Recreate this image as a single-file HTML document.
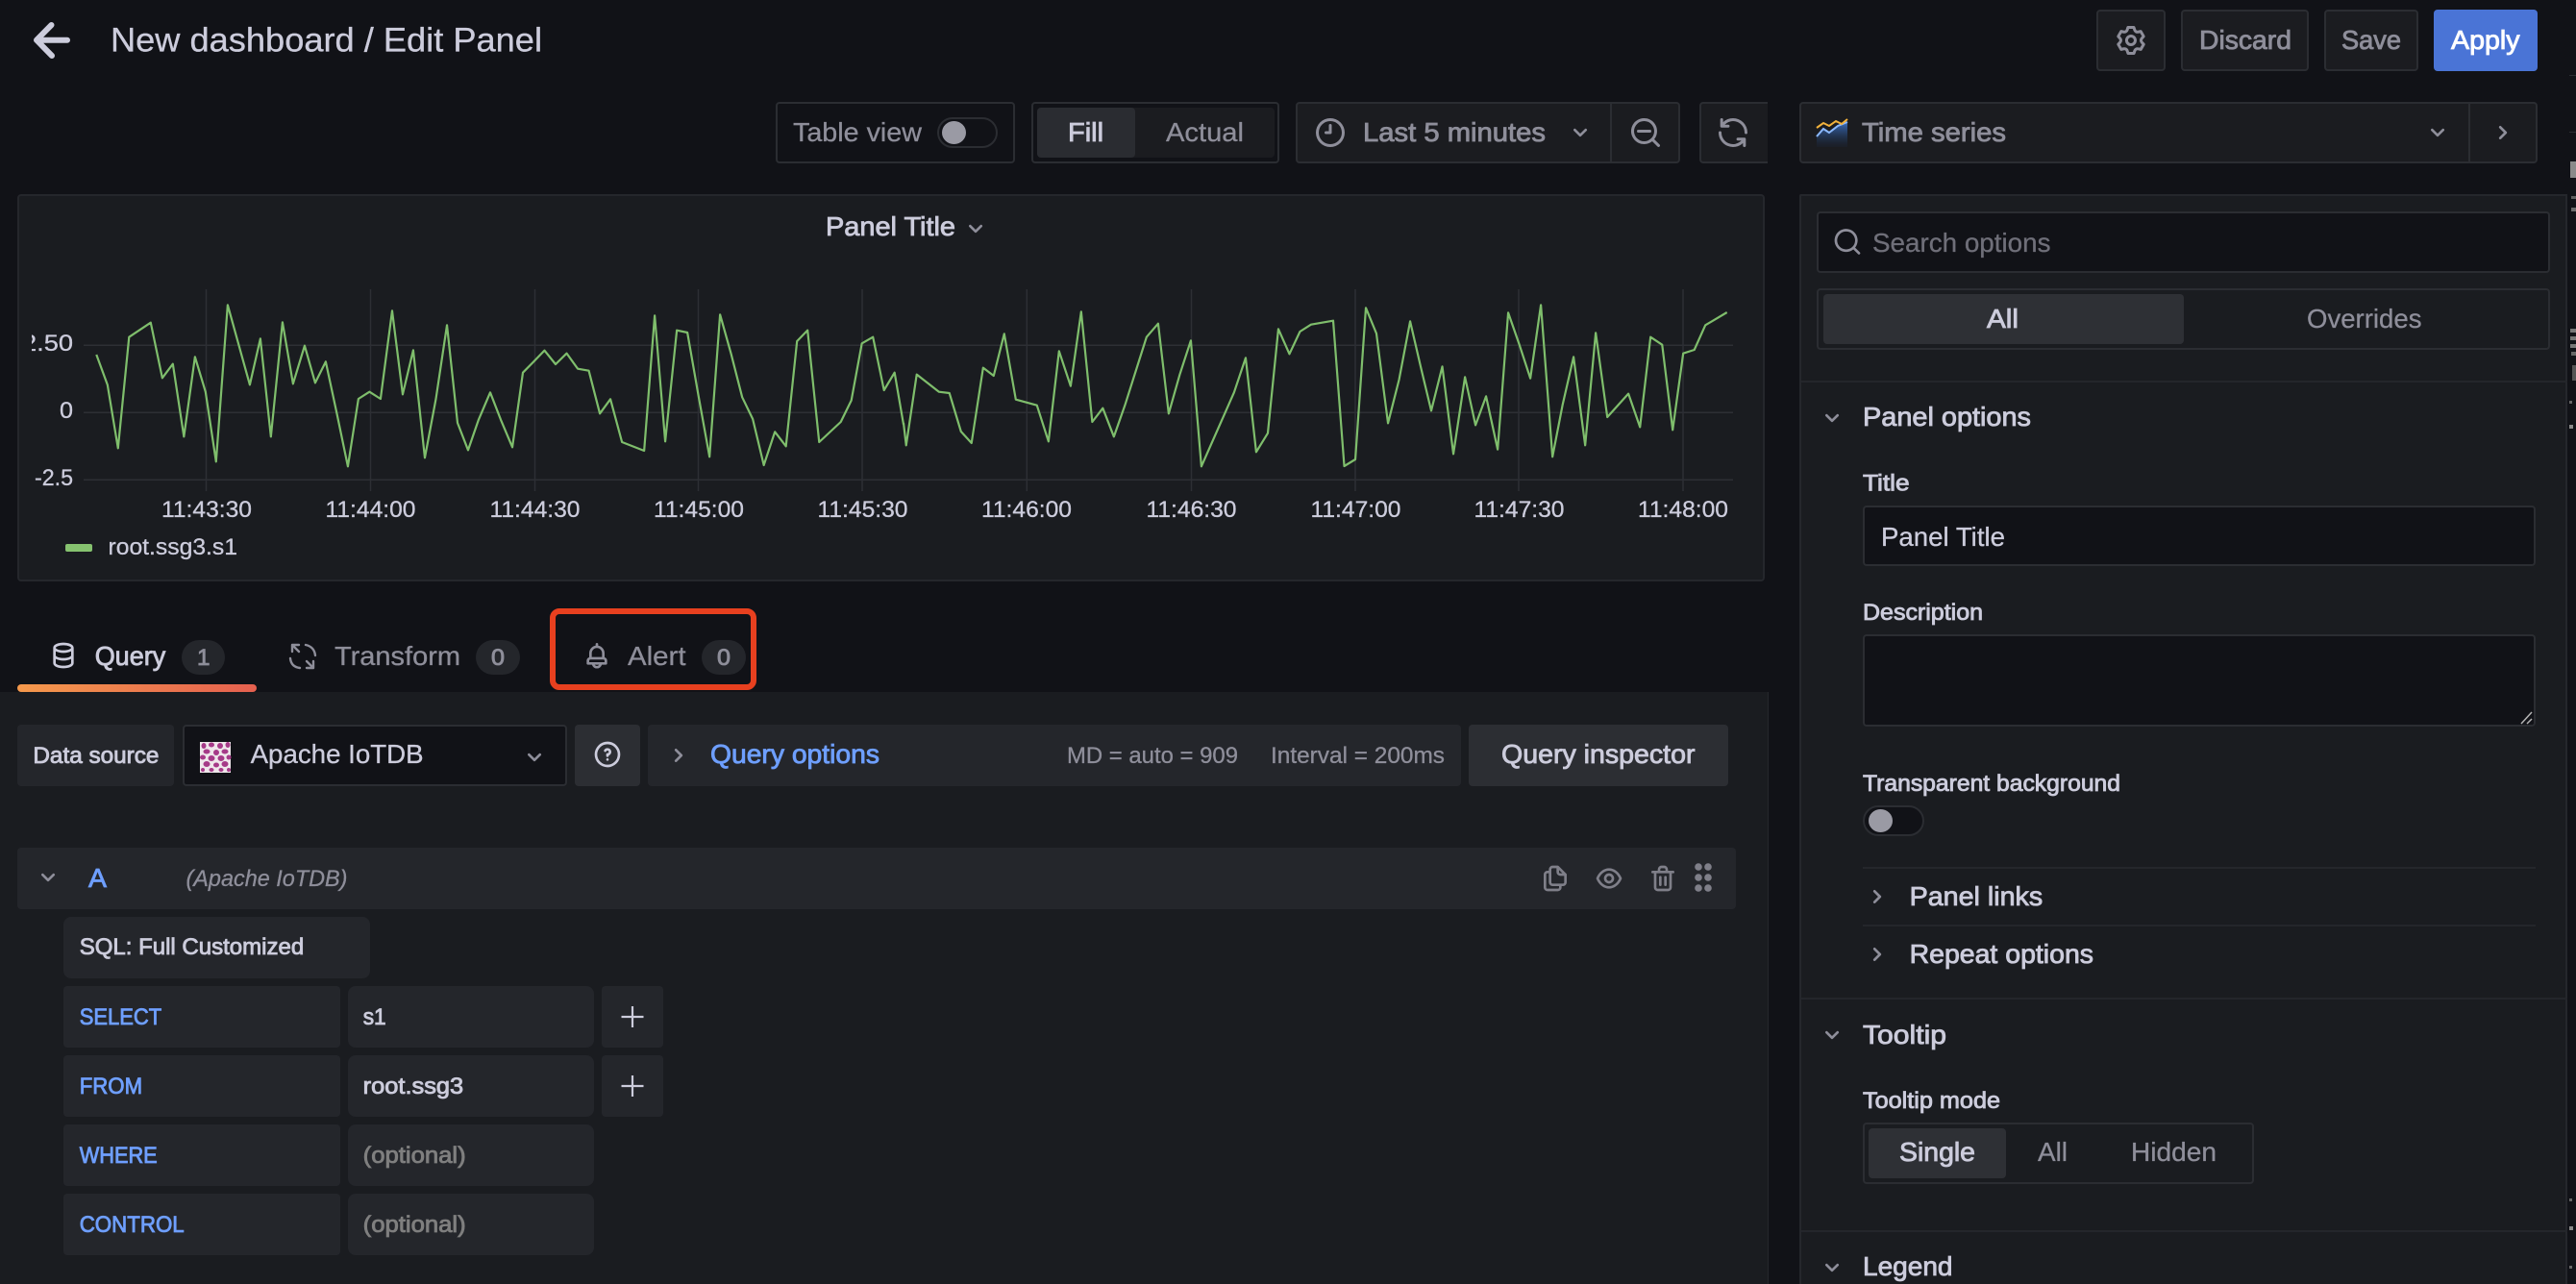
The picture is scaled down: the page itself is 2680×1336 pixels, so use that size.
<!DOCTYPE html>
<html lang="en">
<head>
<meta charset="utf-8">
<title>New dashboard / Edit Panel</title>
<style>
html,body{margin:0;padding:0;background:#111217;width:2680px;height:1336px;overflow:hidden}
#app{position:relative;width:2680px;height:1336px;overflow:hidden;background:#111217}
#app>div{position:absolute;box-sizing:border-box}
.btn{background:#1b1c20;border:2px solid #2b2d32;border-radius:4px}
.out{border:2px solid #2b2d32;border-radius:4px}
.panel{background:#1a1c20}
.row{background:#24262b;border-radius:4px}
.hi{background:#2c2e33;border-radius:4px}
.inp{background:#111217;border:2px solid #2b2d32;border-radius:4px}
.sel{background:#2e3035;border-radius:4px}
.line{background:#24262b}
.badge{background:#24262b;border-radius:20px}
svg{position:absolute;left:0;top:0}
text{font-family:"Liberation Sans",Arial,sans-serif;fill:currentColor;stroke:currentColor;stroke-width:.3px}
text.m{stroke-width:.85px}
.c1{color:#ccccdc}.c2{color:#8e8e9a}.c3{color:#7a7a84}.bl{color:#6e9fff}.w{color:#fff}
.ic{fill:#8e8e9a}.ic1{fill:#ccccdc}.ic3{fill:#7f7f89}
</style>
</head>
<body>
<div id="app">
  <!-- header buttons -->
  <div class="btn" style="left:2181px;top:10px;width:72px;height:64px"></div>
  <div class="btn" style="left:2269px;top:10px;width:133px;height:64px"></div>
  <div class="btn" style="left:2418px;top:10px;width:98px;height:64px"></div>
  <div style="left:2532px;top:10px;width:108px;height:64px;background:#4a74d6;border-radius:4px"></div>

  <!-- toolbar -->
  <div class="out" style="left:807px;top:106px;width:249px;height:64px"></div>
  <div style="left:975px;top:122px;width:63px;height:32px;background:#111217;border:2px solid #2b2d32;border-radius:16px"></div>
  <div style="left:980px;top:126px;width:25px;height:24px;background:#9a9aa4;border-radius:50%"></div>
  <div class="out" style="left:1073px;top:106px;width:258px;height:64px"></div>
  <div style="left:1079px;top:112px;width:247px;height:52px;background:#1b1c20;border-radius:4px"></div>
  <div style="left:1079px;top:112px;width:102px;height:52px;background:#2a2c31;border-radius:4px"></div>
  <div class="btn" style="left:1348px;top:106px;width:400px;height:64px"></div>
  <div style="left:1675px;top:108px;width:2px;height:60px;background:#2b2d32"></div>
  <div class="btn" style="left:1768px;top:106px;width:71px;height:64px;border-right:0;border-radius:4px 0 0 4px"></div>
  <div class="btn" style="left:1872px;top:106px;width:768px;height:64px"></div>
  <div style="left:2568px;top:108px;width:2px;height:60px;background:#2b2d32"></div>

  <!-- chart panel -->
  <div class="panel" style="left:18px;top:202px;width:1818px;height:403px;border:2px solid #25272c;border-radius:4px"></div>

  <!-- tab bar & query area -->
  <div class="badge" style="left:189px;top:666px;width:45px;height:36px"></div>
  <div class="badge" style="left:495px;top:666px;width:46px;height:36px"></div>
  <div class="badge" style="left:730px;top:666px;width:46px;height:36px"></div>
  <div class="panel" style="left:0;top:720px;width:1840px;height:616px;border-right:1px solid #25272c"></div>
  <div style="left:18px;top:712px;width:249px;height:8px;border-radius:4px;background:linear-gradient(90deg,#f5994c,#e5604f)"></div>
  <div style="left:572px;top:633px;width:215px;height:85px;border:6px solid #e8401f;border-radius:10px"></div>

  <div class="row" style="left:18px;top:754px;width:163px;height:64px"></div>
  <div class="inp" style="left:190px;top:754px;width:400px;height:64px"></div>
  <div class="hi" style="left:598px;top:754px;width:68px;height:64px"></div>
  <div class="row" style="left:674px;top:754px;width:846px;height:64px"></div>
  <div class="hi" style="left:1528px;top:754px;width:270px;height:64px"></div>

  <div class="row" style="left:18px;top:882px;width:1788px;height:64px"></div>
  <div class="row" style="left:66px;top:954px;width:319px;height:64px;border-radius:8px"></div>
  <div class="row" style="left:66px;top:1026px;width:288px;height:64px"></div>
  <div class="row" style="left:362px;top:1026px;width:256px;height:64px;border-radius:8px"></div>
  <div class="row" style="left:626px;top:1026px;width:64px;height:64px"></div>
  <div class="row" style="left:66px;top:1098px;width:288px;height:64px"></div>
  <div class="row" style="left:362px;top:1098px;width:256px;height:64px;border-radius:8px"></div>
  <div class="row" style="left:626px;top:1098px;width:64px;height:64px"></div>
  <div class="row" style="left:66px;top:1170px;width:288px;height:64px"></div>
  <div class="row" style="left:362px;top:1170px;width:256px;height:64px;border-radius:8px"></div>
  <div class="row" style="left:66px;top:1242px;width:288px;height:64px"></div>
  <div class="row" style="left:362px;top:1242px;width:256px;height:64px;border-radius:8px"></div>

  <!-- right options pane -->
  <div class="panel" style="left:1872px;top:202px;width:799px;height:1134px;border:2px solid #25272c;border-bottom:0;border-radius:2px 0 0 0"></div>
  <div class="inp" style="left:1890px;top:220px;width:763px;height:64px"></div>
  <div class="out" style="left:1890px;top:300px;width:763px;height:64px"></div>
  <div class="sel" style="left:1897px;top:306px;width:375px;height:52px"></div>
  <div class="line" style="left:1874px;top:396px;width:797px;height:2px"></div>
  <div class="inp" style="left:1938px;top:526px;width:700px;height:63px"></div>
  <div class="inp" style="left:1938px;top:660px;width:700px;height:96px"></div>
  <div style="left:1938px;top:838px;width:64px;height:32px;background:#111217;border:2px solid #2b2d32;border-radius:16px"></div>
  <div style="left:1944px;top:842px;width:25px;height:24px;background:#9a9aa4;border-radius:50%"></div>
  <div class="line" style="left:1938px;top:902px;width:700px;height:2px"></div>
  <div class="line" style="left:1938px;top:962px;width:700px;height:2px"></div>
  <div class="line" style="left:1874px;top:1038px;width:797px;height:2px"></div>
  <div class="out" style="left:1938px;top:1168px;width:407px;height:64px"></div>
  <div class="sel" style="left:1944px;top:1174px;width:143px;height:52px"></div>
  <div class="line" style="left:1874px;top:1280px;width:797px;height:2px"></div>

  <!-- right edge remnants -->
  <div style="left:2674px;top:168px;width:6px;height:17px;background:#8a8a8a"></div>
  <div style="left:2675px;top:204px;width:5px;height:3px;background:#5f5f5f"></div>
  <div style="left:2675px;top:216px;width:5px;height:4px;background:#6a6a6a"></div>
  <div style="left:2674px;top:342px;width:6px;height:4px;background:#777"></div>
  <div style="left:2674px;top:350px;width:6px;height:4px;background:#777"></div>
  <div style="left:2674px;top:358px;width:6px;height:4px;background:#777"></div>
  <div style="left:2675px;top:366px;width:5px;height:4px;background:#666"></div>
  <div style="left:2676px;top:380px;width:4px;height:16px;background:#555"></div>
  <div style="left:2673px;top:78px;width:7px;height:1px;background:#2b2d32"></div>
  <div style="left:2673px;top:137px;width:7px;height:1px;background:#2b2d32"></div>
  <div style="left:2673px;top:417px;width:3px;height:3px;background:#666"></div>
  <div style="left:2673px;top:442px;width:4px;height:4px;background:#888"></div>
  <div style="left:2673px;top:1247px;width:3px;height:3px;background:#666"></div>
  <div style="left:2673px;top:1276px;width:4px;height:4px;background:#888"></div>
  <div style="left:2673px;top:1317px;width:3px;height:3px;background:#666"></div>

  <svg width="2680" height="1336" viewBox="0 0 2680 1336" xmlns="http://www.w3.org/2000/svg">
    <defs>
      <path id="dn" d="M17,9.17a1,1,0,0,0-1.41,0L12,12.71,8.46,9.17a1,1,0,0,0-1.41,0,1,1,0,0,0,0,1.42l4.24,4.24a1,1,0,0,0,1.42,0L17,10.59A1,1,0,0,0,17,9.17Z"/>
      <path id="rt" d="M14.83,11.29,10.59,7.05a1,1,0,0,0-1.42,0,1,1,0,0,0,0,1.41L12.71,12,9.17,15.54a1,1,0,0,0,0,1.41,1,1,0,0,0,.71.29,1,1,0,0,0,.71-.29l4.24-4.24A1,1,0,0,0,14.83,11.29Z"/>
      <linearGradient id="ts" x1="0" y1="0" x2="0" y2="1"><stop offset="0" stop-color="#3a6fc0"/><stop offset="1" stop-color="#1a2840" stop-opacity=".2"/></linearGradient>
      <clipPath id="yc"><rect x="33" y="340" width="60" height="50"/></clipPath>
    </defs>

    <!-- back arrow -->
    <path d="M70,41.7H40M53.5,26L38,41.7L54,58" fill="none" stroke="#ccccdc" stroke-width="6" stroke-linecap="round" stroke-linejoin="round"/>
    <text x="115" y="53.5" font-size="35" textLength="449" lengthAdjust="spacingAndGlyphs" class="c1">New dashboard / Edit Panel</text>

    <!-- gear -->
    <path transform="translate(2199.5,24) scale(1.5)" class="ic" d="M19.9,12.66a1,1,0,0,1,0-1.32L21.18,9.9a1,1,0,0,0,.12-1.17l-2-3.46a1,1,0,0,0-1.07-.48l-1.88.38a1,1,0,0,1-1.15-.66l-.61-1.83A1,1,0,0,0,13.64,2h-4a1,1,0,0,0-1,.68L8.08,4.51a1,1,0,0,1-1.15.66L5,4.79A1,1,0,0,0,4,5.27L2,8.73A1,1,0,0,0,2.1,9.9l1.27,1.44a1,1,0,0,1,0,1.32L2.1,14.1A1,1,0,0,0,2,15.27l2,3.46a1,1,0,0,0,1.07.48l1.88-.38a1,1,0,0,1,1.15.66l.61,1.83a1,1,0,0,0,1,.68h4a1,1,0,0,0,.95-.68l.61-1.83a1,1,0,0,1,1.15-.66l1.88.38a1,1,0,0,0,1.07-.48l2-3.46a1,1,0,0,0-.12-1.17ZM18.41,14l.8.9-1.28,2.22-1.18-.24a3,3,0,0,0-3.45,2L12.92,20H10.36L10,18.86a3,3,0,0,0-3.45-2l-1.18.24L4.07,14.9l.8-.9a3,3,0,0,0,0-4l-.8-.9L5.35,6.89l1.18.24a3,3,0,0,0,3.45-2L10.36,4h2.56l.38,1.14a3,3,0,0,0,3.45,2l1.18-.24L19.21,9.1l-.8.9A3,3,0,0,0,18.41,14ZM11.64,8a4,4,0,1,0,4,4A4,4,0,0,0,11.64,8Zm0,6a2,2,0,1,1,2-2A2,2,0,0,1,11.64,14Z"/>
    <text x="2288" y="51" font-size="28" textLength="96" lengthAdjust="spacingAndGlyphs" class="c2 m">Discard</text>
    <text x="2436" y="51" font-size="28" textLength="62" lengthAdjust="spacingAndGlyphs" class="c2 m">Save</text>
    <text x="2550" y="51" font-size="28" textLength="71.5" lengthAdjust="spacingAndGlyphs" class="w m">Apply</text>

    <!-- toolbar text -->
    <text x="825" y="147" font-size="28" textLength="134" lengthAdjust="spacingAndGlyphs" class="c2">Table view</text>
    <text x="1111" y="147" font-size="28" textLength="37" lengthAdjust="spacingAndGlyphs" class="c1 m">Fill</text>
    <text x="1213" y="147" font-size="28" textLength="81" lengthAdjust="spacingAndGlyphs" class="c2">Actual</text>
    <path transform="translate(1366,120) scale(1.5)" class="ic" d="M12,2A10,10,0,1,0,22,12,10,10,0,0,0,12,2Zm0,18a8,8,0,1,1,8-8A8,8,0,0,1,12,20ZM12,6a1,1,0,0,0-1,1v4H9a1,1,0,0,0,0,2h3a1,1,0,0,0,1-1V7A1,1,0,0,0,12,6Z"/>
    <text x="1418" y="147" font-size="28" textLength="190" lengthAdjust="spacingAndGlyphs" class="c2 m">Last 5 minutes</text>
    <use href="#dn" transform="translate(1628,122) scale(1.333)" class="ic"/>
    <path transform="translate(1694,120) scale(1.5)" class="ic" d="M21.71,20.29,18,16.61A9,9,0,1,0,16.61,18l3.68,3.68a1,1,0,0,0,1.42,0A1,1,0,0,0,21.71,20.29ZM11,18a7,7,0,1,1,7-7A7,7,0,0,1,11,18Zm4-8H7a1,1,0,0,0,0,2h8a1,1,0,0,0,0-2Z"/>
    <path transform="translate(1785,120) scale(1.5)" class="ic" d="M19.91,15.51H15.38a1,1,0,0,0,0,2h2.4A8,8,0,0,1,4,12a1,1,0,0,0-2,0,10,10,0,0,0,16.88,7.23V21a1,1,0,0,0,2,0V16.5A1,1,0,0,0,19.91,15.51ZM12,2A10,10,0,0,0,5.12,4.77V3a1,1,0,0,0-2,0V7.5a1,1,0,0,0,1,1h4.5a1,1,0,0,0,0-2H6.22A8,8,0,0,1,20,12a1,1,0,0,0,2,0A10,10,0,0,0,12,2Z"/>

    <!-- time series picker -->
    <path d="M1890,142L1897,134L1903,138L1912,131L1922,127V153H1890Z" fill="url(#ts)"/>
    <path d="M1890,142L1897,134L1903,138L1912,131L1922,127" fill="none" stroke="#8ab8ff" stroke-width="2"/>
    <path d="M1890,133L1897,128L1903,131L1910,126L1916,129L1922,124" fill="none" stroke="#f2b23c" stroke-width="2"/>
    <text x="1937" y="147" font-size="28" textLength="150" lengthAdjust="spacingAndGlyphs" class="c2 m">Time series</text>
    <use href="#dn" transform="translate(2520,122) scale(1.333)" class="ic"/>
    <use href="#rt" transform="translate(2588,122) scale(1.333)" class="ic"/>

    <!-- chart -->
    <text x="859" y="245" font-size="28" textLength="135" lengthAdjust="spacingAndGlyphs" class="c1 m">Panel Title</text>
    <use href="#dn" transform="translate(999,222) scale(1.333)" class="ic"/>
    <g stroke="#2d2f34" stroke-width="1.5">
      <path d="M87,359.3H1803M87,429.3H1803M87,499.3H1803"/>
      <path d="M214.5,301V511M385.5,301V511M556.5,301V511M726.5,301V511M897,301V511M1068.3,301V511M1239.5,301V511M1410,301V511M1580,301V511M1751,301V511"/>
    </g>
    <g fill="none" stroke="#7fbe6c" stroke-width="2.2" stroke-linejoin="round">
      <polyline vector-effect="non-scaling-stroke" transform="translate(80,295) scale(.54847,.33333)" points="37,222 58,316 78,514 99,167 140,122 162,295 182,251 203,478 224,229 244,338 264,556 286,67 328,316 348,172 368,478 390,121 410,313 432,194 452,310 472,244 493,405 514,571 534,360 555,338 576,360 598,85 618,346 638,208 660,544 681,360 702,130 722,435 742,520 762,425 784,340 804,425 826,511 846,278 867,243 887,209 908,252 929,218 950,266 971,272 992,406 1012,361 1034,495 1076,522 1096,100 1116,493 1138,146 1158,153 1179,350 1200,541 1220,97 1241,220 1262,355 1282,423 1303,567 1324,463 1345,508 1366,180 1386,146 1408,495 1449,432 1469,365 1489,187 1510,167 1531,333 1551,278 1568,440"/>
      <polyline vector-effect="non-scaling-stroke" transform="translate(940,295) scale(.54847,.33333)" points="0,435 5,505 25,284 67,338 87,342 109,462 129,498 151,263 171,288 191,157 213,362 253,380 275,493 295,211 317,320 337,88 358,432 378,389 399,478 420,380 461,167 483,125 503,406 524,284 545,178 565,571 627,340 649,232 669,526 691,467 711,142 732,220 752,150 773,128 815,116 836,570 857,549 877,76 897,156 919,436 940,300 961,118 981,260 1001,397 1022,259 1043,532 1065,292 1085,442 1105,352 1127,518 1147,91 1168,190 1189,296 1209,67 1231,541 1250,380 1271,229 1293,505 1313,154 1335,417 1375,344 1397,448 1417,167 1439,191 1459,457 1479,218 1500,207 1521,130 1562,90"/>
    </g>
    <g class="c1" font-size="24">
      <text x="23" y="365" font-size="24" textLength="53" lengthAdjust="spacingAndGlyphs" clip-path="url(#yc)">2.50</text>
      <text x="62" y="435" font-size="24" textLength="14" lengthAdjust="spacingAndGlyphs">0</text>
      <text x="36" y="505" font-size="24" textLength="40" lengthAdjust="spacingAndGlyphs">-2.5</text>
      <text x="168" y="538" font-size="24" textLength="94" lengthAdjust="spacingAndGlyphs">11:43:30</text>
      <text x="338.5" y="538" font-size="24" textLength="94" lengthAdjust="spacingAndGlyphs">11:44:00</text>
      <text x="509.5" y="538" font-size="24" textLength="94" lengthAdjust="spacingAndGlyphs">11:44:30</text>
      <text x="680" y="538" font-size="24" textLength="94" lengthAdjust="spacingAndGlyphs">11:45:00</text>
      <text x="850.5" y="538" font-size="24" textLength="94" lengthAdjust="spacingAndGlyphs">11:45:30</text>
      <text x="1021" y="538" font-size="24" textLength="94" lengthAdjust="spacingAndGlyphs">11:46:00</text>
      <text x="1192.5" y="538" font-size="24" textLength="94" lengthAdjust="spacingAndGlyphs">11:46:30</text>
      <text x="1363.5" y="538" font-size="24" textLength="94" lengthAdjust="spacingAndGlyphs">11:47:00</text>
      <text x="1533.5" y="538" font-size="24" textLength="94" lengthAdjust="spacingAndGlyphs">11:47:30</text>
      <text x="1704" y="538" font-size="24" textLength="94" lengthAdjust="spacingAndGlyphs">11:48:00</text>
      <text x="112.5" y="577" font-size="24" textLength="134.5" lengthAdjust="spacingAndGlyphs">root.ssg3.s1</text>
    </g>
    <rect x="68" y="566" width="28" height="8" rx="2" fill="#86c26f"/>

    <!-- tabs -->
    <path transform="translate(50,666) scale(1.333)" class="ic1" d="M12,2C8,2,4,3.37,4,6V18c0,2.63,4,4,8,4s8-1.37,8-4V6C20,3.37,16,2,12,2Zm6,16c0,.71-2.28,2-6,2s-6-1.29-6-2V14.73A13.16,13.16,0,0,0,12,16a13.16,13.16,0,0,0,6-1.27Zm0-6c0,.71-2.28,2-6,2s-6-1.29-6-2V8.73A13.16,13.16,0,0,0,12,10a13.16,13.16,0,0,0,6-1.27ZM12,8C8.28,8,6,6.71,6,6s2.28-2,6-2,6,1.29,6,2S15.72,8,12,8Z"/>
    <text x="98.7" y="692" font-size="28" textLength="73.5" lengthAdjust="spacingAndGlyphs" class="c1 m">Query</text>
    <text x="205" y="692" font-size="24" textLength="13.5" lengthAdjust="spacingAndGlyphs" class="c2 m">1</text>
    <path d="M304,671L311,678M304,671h7M304,671v7M318,671Q327,673 328,682M302,685Q303,694 312,695M326,695L319,688M326,695h-7M326,695v-7" fill="none" stroke="#8e8e9a" stroke-width="2.4" stroke-linecap="round"/>
    <text x="348" y="692" font-size="28" textLength="131" lengthAdjust="spacingAndGlyphs" class="c2">Transform</text>
    <text x="511" y="692" font-size="24" textLength="14" lengthAdjust="spacingAndGlyphs" class="c2 m">0</text>
    <path transform="translate(605,666.3) scale(1.333)" class="ic" d="M18,13.18V10a6,6,0,0,0-5-5.91V3a1,1,0,0,0-2,0V4.09A6,6,0,0,0,6,10v3.18A3,3,0,0,0,4,16v2a1,1,0,0,0,1,1H8.14a4,4,0,0,0,7.72,0H19a1,1,0,0,0,1-1V16A3,3,0,0,0,18,13.18ZM8,10a4,4,0,0,1,8,0v3H8Zm4,10a2,2,0,0,1-1.72-1h3.44A2,2,0,0,1,12,20Zm6-3H6V16a1,1,0,0,1,1-1H17a1,1,0,0,1,1,1Z"/>
    <text x="653" y="692" font-size="28" textLength="60.5" lengthAdjust="spacingAndGlyphs" class="c2">Alert</text>
    <text x="746" y="692" font-size="24" textLength="14" lengthAdjust="spacingAndGlyphs" class="c2 m">0</text>

    <!-- query toolbar -->
    <text x="34.4" y="794" font-size="24" textLength="131" lengthAdjust="spacingAndGlyphs" class="c1 m">Data source</text>
    <rect x="208" y="772" width="32" height="32" fill="#efe7eb"/>
    <g fill="#a63a88">
      <ellipse cx="212" cy="776" rx="2.5" ry="3"/><ellipse cx="220" cy="775" rx="3" ry="2.5"/><ellipse cx="229" cy="776" rx="3" ry="3"/><ellipse cx="237" cy="775" rx="2.5" ry="3"/>
      <ellipse cx="215" cy="782" rx="3.5" ry="2.5"/><ellipse cx="225" cy="783" rx="3" ry="3"/><ellipse cx="234" cy="782" rx="3.5" ry="2.5"/>
      <ellipse cx="211" cy="788" rx="3" ry="2.5"/><ellipse cx="220" cy="789" rx="3.5" ry="3"/><ellipse cx="230" cy="789" rx="3.5" ry="3"/><ellipse cx="238" cy="788" rx="2.5" ry="2.5"/>
      <ellipse cx="215" cy="795" rx="3.5" ry="3"/><ellipse cx="225" cy="796" rx="3" ry="2.5"/><ellipse cx="234" cy="795" rx="3.5" ry="3"/>
      <ellipse cx="211" cy="801" rx="2" ry="2"/><ellipse cx="220" cy="801" rx="2.5" ry="2"/><ellipse cx="230" cy="801" rx="2.5" ry="2"/><ellipse cx="238" cy="801" rx="2" ry="2"/>
    </g>
    <text x="260.6" y="794" font-size="28" textLength="180" lengthAdjust="spacingAndGlyphs" class="c1">Apache IoTDB</text>
    <use href="#dn" transform="translate(540,772) scale(1.333)" class="ic"/>
    <path transform="translate(616,769) scale(1.333)" class="ic1" d="M11.29,15.29a1.58,1.58,0,0,0-.12.15.76.76,0,0,0-.09.18.64.64,0,0,0-.06.18,1.36,1.36,0,0,0,0,.2.84.84,0,0,0,.08.38.9.9,0,0,0,.54.54.94.94,0,0,0,.76,0,.9.9,0,0,0,.54-.54A1,1,0,0,0,13,16a1,1,0,0,0-.29-.71A1,1,0,0,0,11.29,15.29ZM12,2A10,10,0,1,0,22,12,10,10,0,0,0,12,2Zm0,18a8,8,0,1,1,8-8A8,8,0,0,1,12,20ZM12,7A3,3,0,0,0,9.4,8.5a1,1,0,1,0,1.73,1A1,1,0,0,1,12,9a1,1,0,0,1,0,2,1,1,0,0,0-1,1v1a1,1,0,0,0,2,0v-.18A3,3,0,0,0,12,7Z"/>
    <use href="#rt" transform="translate(690,770) scale(1.333)" class="ic"/>
    <text x="739" y="794" font-size="28" textLength="176" lengthAdjust="spacingAndGlyphs" class="bl m">Query options</text>
    <text x="1110" y="794" font-size="24" textLength="178" lengthAdjust="spacingAndGlyphs" class="c2">MD = auto = 909</text>
    <text x="1322" y="794" font-size="24" textLength="181" lengthAdjust="spacingAndGlyphs" class="c2">Interval = 200ms</text>
    <text x="1562" y="794" font-size="28" textLength="201.5" lengthAdjust="spacingAndGlyphs" class="c1 m">Query inspector</text>

    <!-- query row -->
    <use href="#dn" transform="translate(34,897) scale(1.333)" class="ic"/>
    <text x="92" y="923" font-size="28" textLength="19" lengthAdjust="spacingAndGlyphs" class="bl m">A</text>
    <text x="193.5" y="922" font-size="24" font-style="italic" textLength="168" lengthAdjust="spacingAndGlyphs" class="c2">(Apache IoTDB)</text>
    <path transform="translate(1602,898) scale(1.333)" class="ic3" d="M21,8.94a1.31,1.31,0,0,0-.06-.27l0-.09a1.07,1.07,0,0,0-.19-.28h0l-6-6h0a1.07,1.07,0,0,0-.28-.19.32.32,0,0,0-.09,0A.88.88,0,0,0,14.05,2H10A3,3,0,0,0,7,5V6H6A3,3,0,0,0,3,9V19a3,3,0,0,0,3,3h8a3,3,0,0,0,3-3V18h1a3,3,0,0,0,3-3V9S21,9,21,8.94ZM15,5.41,17.59,8H16a1,1,0,0,1-1-1ZM15,19a1,1,0,0,1-1,1H6a1,1,0,0,1-1-1V9A1,1,0,0,1,6,8H7v7a3,3,0,0,0,3,3h5Zm4-4a1,1,0,0,1-1,1H10a1,1,0,0,1-1-1V5a1,1,0,0,1,1-1h3V7a3,3,0,0,0,3,3h3Z"/>
    <path transform="translate(1658,898) scale(1.333)" class="ic3" d="M21.92,11.6C19.9,6.91,16.1,4,12,4S4.1,6.91,2.08,11.6a1,1,0,0,0,0,.8C4.1,17.09,7.9,20,12,20s7.9-2.91,9.92-7.6A1,1,0,0,0,21.92,11.6ZM12,18c-3.17,0-6.17-2.29-7.9-6C5.83,8.29,8.83,6,12,6s6.17,2.29,7.9,6C18.17,15.71,15.17,18,12,18ZM12,8a4,4,0,1,0,4,4A4,4,0,0,0,12,8Zm0,6a2,2,0,1,1,2-2A2,2,0,0,1,12,14Z"/>
    <path transform="translate(1714,898) scale(1.333)" class="ic3" d="M10,18a1,1,0,0,0,1-1V11a1,1,0,0,0-2,0v6A1,1,0,0,0,10,18ZM20,6H16V5a3,3,0,0,0-3-3H11A3,3,0,0,0,8,5V6H4A1,1,0,0,0,4,8H5V19a3,3,0,0,0,3,3h8a3,3,0,0,0,3-3V8h1a1,1,0,0,0,0-2ZM10,5a1,1,0,0,1,1-1h2a1,1,0,0,1,1,1V6H10Zm7,14a1,1,0,0,1-1,1H8a1,1,0,0,1-1-1V8H17Zm-3-1a1,1,0,0,0,1-1V11a1,1,0,0,0-2,0v6A1,1,0,0,0,14,18Z"/>
    <g class="ic3">
      <circle cx="1767" cy="902" r="3.8"/><circle cx="1777" cy="902" r="3.8"/>
      <circle cx="1767" cy="913" r="3.8"/><circle cx="1777" cy="913" r="3.8"/>
      <circle cx="1767" cy="924" r="3.8"/><circle cx="1777" cy="924" r="3.8"/>
    </g>

    <text x="82.7" y="993" font-size="24" textLength="233.5" lengthAdjust="spacingAndGlyphs" class="c1 m">SQL: Full Customized</text>
    <text x="82.7" y="1066" font-size="24" textLength="85.5" lengthAdjust="spacingAndGlyphs" class="bl m">SELECT</text>
    <text x="377.7" y="1066" font-size="24" textLength="24" lengthAdjust="spacingAndGlyphs" class="c1 m">s1</text>
    <path d="M646.5,1058H669.5M658,1047V1069" stroke="#ccccdc" stroke-width="2.2"/>
    <text x="82.7" y="1138" font-size="24" textLength="65.4" lengthAdjust="spacingAndGlyphs" class="bl m">FROM</text>
    <text x="377.7" y="1138" font-size="24" textLength="104.5" lengthAdjust="spacingAndGlyphs" class="c1 m">root.ssg3</text>
    <path d="M646.5,1130H669.5M658,1119V1141" stroke="#ccccdc" stroke-width="2.2"/>
    <text x="82.7" y="1210" font-size="24" textLength="81" lengthAdjust="spacingAndGlyphs" class="bl m">WHERE</text>
    <text x="377.7" y="1210" font-size="24" textLength="107" lengthAdjust="spacingAndGlyphs" style="color:#7f7f7f" class="m">(optional)</text>
    <text x="82.7" y="1282" font-size="24" textLength="109" lengthAdjust="spacingAndGlyphs" class="bl m">CONTROL</text>
    <text x="377.7" y="1282" font-size="24" textLength="107" lengthAdjust="spacingAndGlyphs" style="color:#7f7f7f" class="m">(optional)</text>

    <!-- right pane -->
    <path transform="translate(1906,235.5) scale(1.333)" class="ic" d="M21.71,20.29,18,16.61A9,9,0,1,0,16.61,18l3.68,3.68a1,1,0,0,0,1.42,0A1,1,0,0,0,21.71,20.29ZM11,18a7,7,0,1,1,7-7A7,7,0,0,1,11,18Z"/>
    <text x="1948" y="262" font-size="28" textLength="185.5" lengthAdjust="spacingAndGlyphs" style="color:#6f6f79">Search options</text>
    <text x="2067" y="341" font-size="28" textLength="33" lengthAdjust="spacingAndGlyphs" class="c1 m">All</text>
    <text x="2400" y="341" font-size="28" textLength="119.5" lengthAdjust="spacingAndGlyphs" class="c2">Overrides</text>

    <use href="#dn" transform="translate(1890,419) scale(1.333)" class="ic"/>
    <text x="1938" y="443" font-size="28" textLength="175" lengthAdjust="spacingAndGlyphs" class="c1 m">Panel options</text>
    <text x="1938" y="510.5" font-size="24" textLength="48.6" lengthAdjust="spacingAndGlyphs" class="c1 m">Title</text>
    <text x="1957" y="568" font-size="28" textLength="129" lengthAdjust="spacingAndGlyphs" class="c1">Panel Title</text>
    <text x="1938" y="645" font-size="24" textLength="125" lengthAdjust="spacingAndGlyphs" class="c1 m">Description</text>
    <path d="M2623,753L2634,741M2629,753L2634,748" stroke="#b5b5b5" stroke-width="1.5"/>
    <text x="1938" y="823" font-size="24" textLength="268" lengthAdjust="spacingAndGlyphs" class="c1 m">Transparent background</text>

    <use href="#rt" transform="translate(1937,917) scale(1.333)" class="ic"/>
    <text x="1986.6" y="942" font-size="28" textLength="138.6" lengthAdjust="spacingAndGlyphs" class="c1 m">Panel links</text>
    <use href="#rt" transform="translate(1937,977) scale(1.333)" class="ic"/>
    <text x="1986.6" y="1002" font-size="28" textLength="191.4" lengthAdjust="spacingAndGlyphs" class="c1 m">Repeat options</text>

    <use href="#dn" transform="translate(1890,1061) scale(1.333)" class="ic"/>
    <text x="1938" y="1086" font-size="28" textLength="87" lengthAdjust="spacingAndGlyphs" class="c1 m">Tooltip</text>
    <text x="1938" y="1153" font-size="24" textLength="143" lengthAdjust="spacingAndGlyphs" class="c1 m">Tooltip mode</text>
    <text x="1976" y="1208" font-size="28" textLength="79" lengthAdjust="spacingAndGlyphs" class="c1 m">Single</text>
    <text x="2120" y="1208" font-size="28" textLength="31" lengthAdjust="spacingAndGlyphs" class="c2">All</text>
    <text x="2217" y="1208" font-size="28" textLength="89" lengthAdjust="spacingAndGlyphs" class="c2">Hidden</text>

    <use href="#dn" transform="translate(1890,1303) scale(1.333)" class="ic"/>
    <text x="1938" y="1327" font-size="28" textLength="93.5" lengthAdjust="spacingAndGlyphs" class="c1 m">Legend</text>
  </svg>
</div>
</body>
</html>
